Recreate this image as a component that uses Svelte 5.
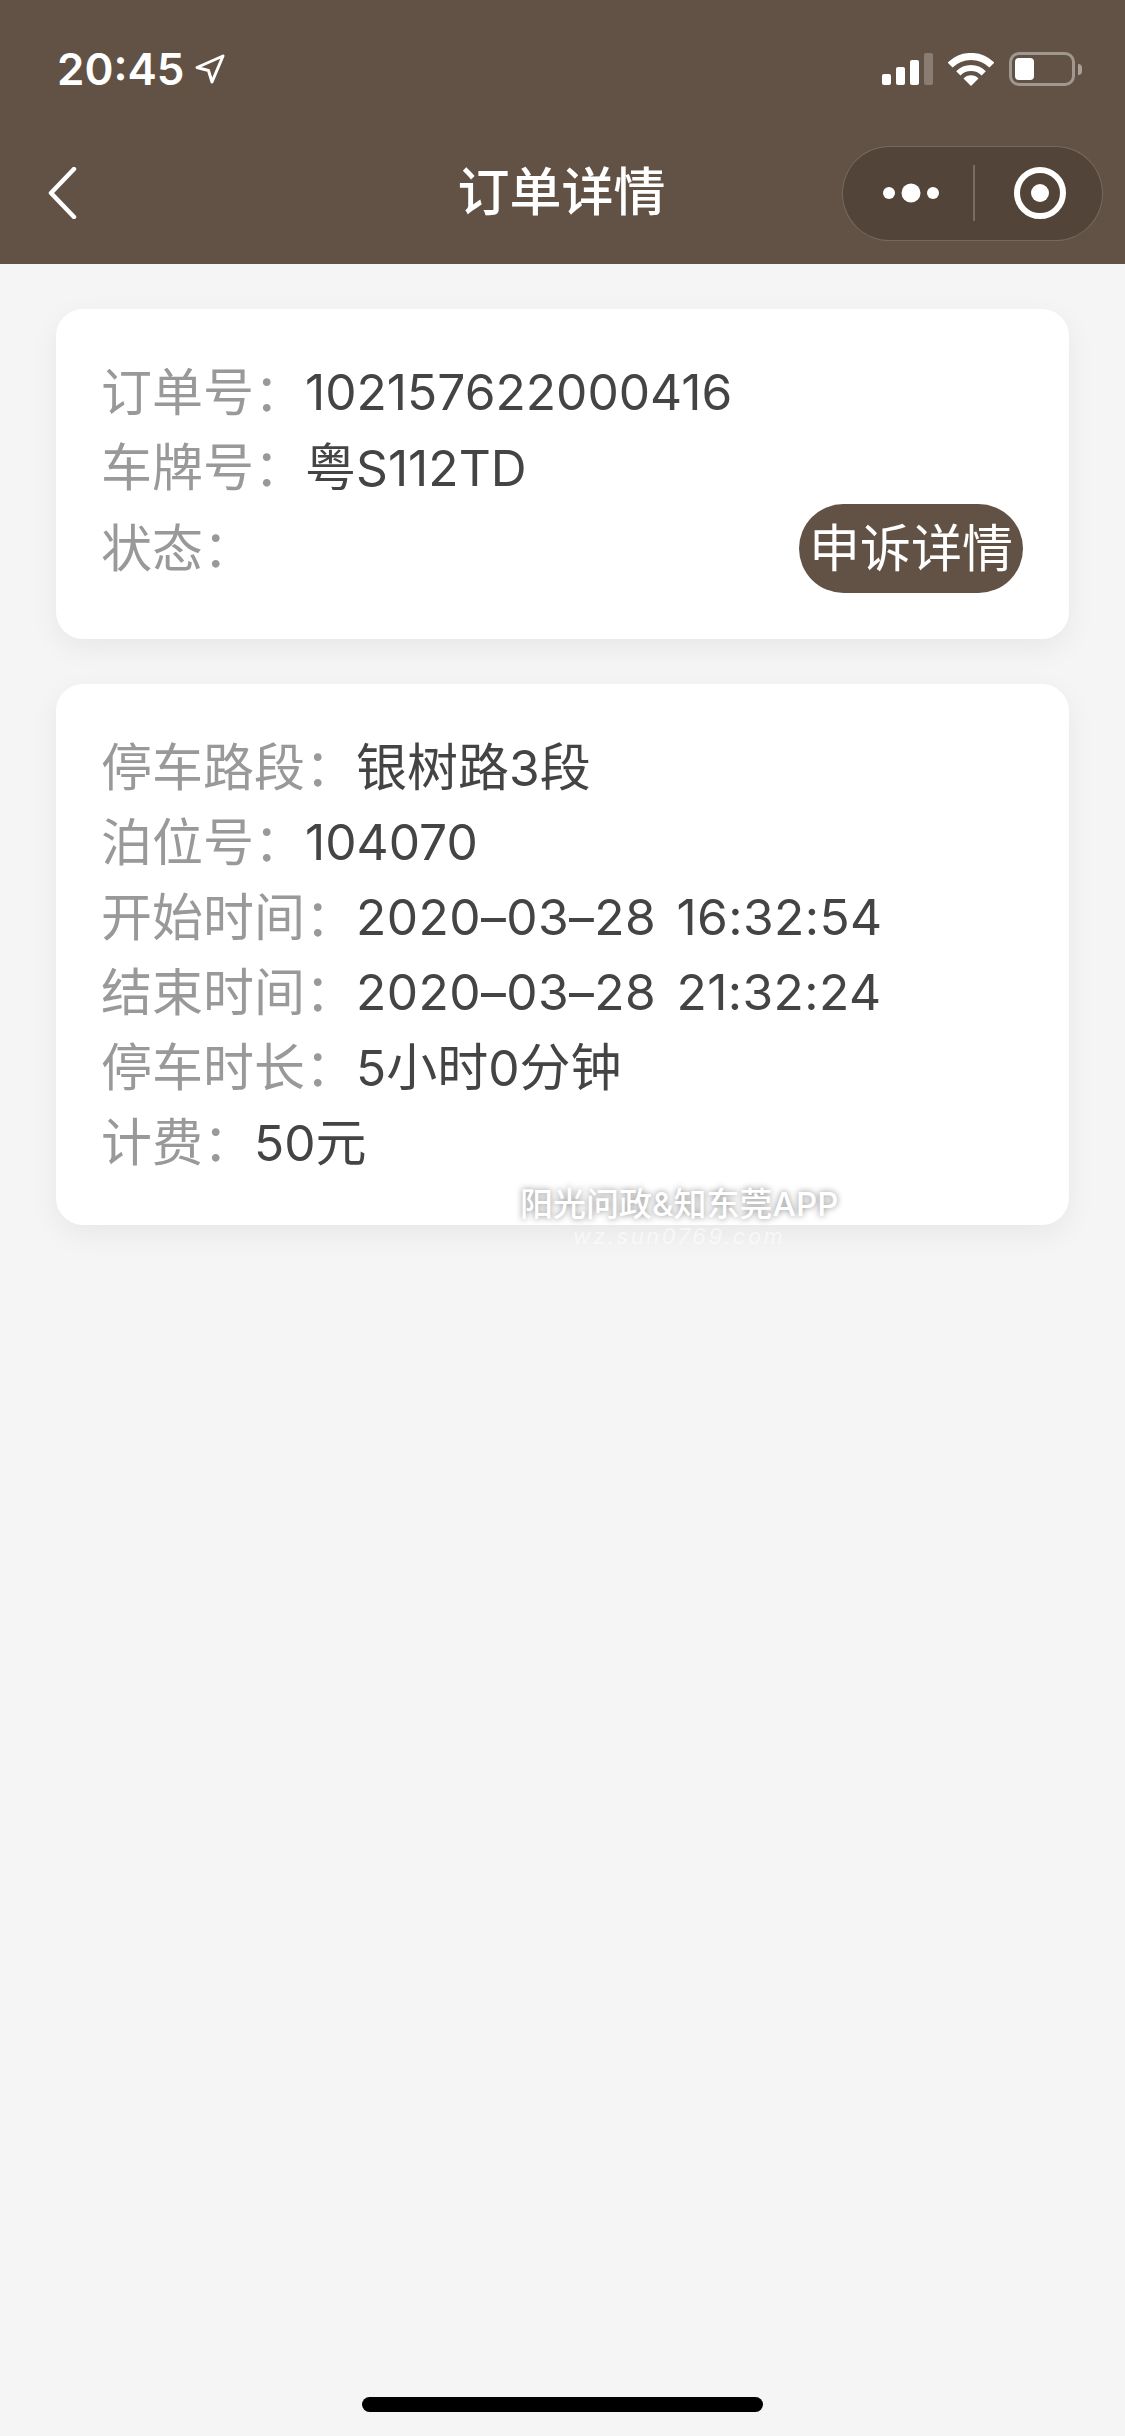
<script>
  const orderRows = [
    { label: '订单号：', value: '102157622000416' },
    { label: '车牌号：', value: '粤S112TD' }
  ];
  const parkingRows = [
    { label: '停车路段：', value: '银树路3段' },
    { label: '泊位号：', value: '104070' },
    { label: '开始时间：', value: '2020–03–28 16:32:54', date: true },
    { label: '结束时间：', value: '2020–03–28 21:32:24', date: true },
    { label: '停车时长：', value: '5小时0分钟' },
    { label: '计费：', value: '50元' }
  ];

  // digits run a bit smaller than the hanzi next to them
  const parts = (text) => text.split(/([\u4e00-\u9fff]+)/).filter(Boolean);
  const isHan = (text) => /[\u4e00-\u9fff]/.test(text);
</script>

{#snippet infoRow(row)}
  <div class="row">
    <span class="label">{row.label}</span>
    <span class="value" class:date={row.date}>
      {#each parts(row.value) as part}
        {#if isHan(part)}<span class="han">{part}</span>{:else}{part}{/if}
      {/each}
    </span>
  </div>
{/snippet}

<div class="page">
  <header class="head">
    <div class="status">
      <div class="clock">
        <span class="time">20:45</span>
        <svg class="arrow" width="30" height="30" viewBox="0 0 30 30">
          <path d="M28 2 L2 13.5 L13.5 16.5 L17 28 Z" fill="none" stroke="#fff" stroke-width="3" stroke-linejoin="round" />
        </svg>
      </div>
      <div class="sys">
        <svg width="51" height="32" viewBox="0 0 51 32">
          <rect x="0" y="21" width="9" height="11" rx="2" fill="#fff" />
          <rect x="14" y="14" width="9" height="18" rx="2" fill="#fff" />
          <rect x="28" y="7" width="9" height="25" rx="2" fill="#fff" />
          <rect x="42" y="0" width="9" height="32" rx="2" fill="#fff" fill-opacity="0.25" />
        </svg>
        <svg width="46" height="33" viewBox="0 0 46 33">
          <path d="M2.1 12.1 A29.5 29.5 0 0 1 43.9 12.1" fill="none" stroke="#fff" stroke-width="7" />
          <path d="M10.3 20.3 A18 18 0 0 1 35.7 20.3" fill="none" stroke="#fff" stroke-width="6" />
          <path d="M23 33 L15.5 25.5 A10.5 10.5 0 0 1 30.5 25.5 Z" fill="#fff" />
        </svg>
        <div class="battery">
          <div class="battery-body"><div class="battery-level"></div></div>
          <div class="battery-cap"></div>
        </div>
      </div>
    </div>
    <nav class="nav">
      <svg class="back" width="29" height="52" viewBox="0 0 29 52">
        <path d="M26 2 L3 26 L26 50" fill="none" stroke="#fff" stroke-width="4.5" stroke-linecap="round" stroke-linejoin="round" />
      </svg>
      <h1>订单详情</h1>
      <div class="capsule">
        <svg width="56" height="20" viewBox="0 0 56 20">
          <circle cx="6" cy="10" r="6" fill="#fff" />
          <circle cx="28" cy="10" r="9.5" fill="#fff" />
          <circle cx="50" cy="10" r="6" fill="#fff" />
        </svg>
        <span class="divider"></span>
        <svg width="52" height="52" viewBox="0 0 52 52">
          <circle cx="26" cy="26" r="23" fill="none" stroke="#fff" stroke-width="6" />
          <circle cx="26" cy="26" r="9" fill="#fff" />
        </svg>
      </div>
    </nav>
  </header>

  <main class="content">
    <section class="card">
      {#each orderRows as row}
        {@render infoRow(row)}
      {/each}
      <div class="row status-row">
        <span class="label">状态：</span>
        <button type="button" class="appeal">申诉详情</button>
      </div>
    </section>

    <section class="card">
      {#each parkingRows as row}
        {@render infoRow(row)}
      {/each}
    </section>
  </main>

  <div class="watermark">
    <div class="wm-title">阳光问政&知东莞APP</div>
    <div class="wm-url">wz.sun0769.com</div>
  </div>

  <div class="home"></div>
</div>

<style>
  :global(body) {
    margin: 0;
    background: #f5f5f5;
  }

  .page {
    position: relative;
    display: flex;
    flex-direction: column;
    min-height: 2436px;
    background: #f5f5f5;
    font-family: Inter, "Noto Sans CJK SC", sans-serif;
  }

  .head {
    height: 264px;
    background: #625245;
    color: #fff;
  }

  .status {
    display: flex;
    justify-content: space-between;
    align-items: center;
    height: 138px;
    padding: 0 43px 0 57px;
  }

  .clock {
    display: flex;
    align-items: center;
    gap: 11px;
  }

  .time {
    font-size: 44px;
    font-weight: 600;
    line-height: 50px;
  }

  .sys {
    display: flex;
    align-items: center;
    gap: 15px;
  }

  .battery {
    display: flex;
    align-items: center;
    gap: 3px;
  }

  .battery-body {
    box-sizing: border-box;
    width: 66px;
    height: 34px;
    padding: 3px;
    border: 3px solid rgba(255, 255, 255, 0.4);
    border-radius: 10px;
  }

  .battery-level {
    width: 19px;
    height: 22px;
    background: #fff;
    border-radius: 4px;
  }

  .battery-cap {
    width: 4px;
    height: 11px;
    background: rgba(255, 255, 255, 0.45);
    border-radius: 0 4px 4px 0;
  }

  .nav {
    display: grid;
    grid-template-columns: 1fr auto 1fr;
    align-items: center;
    height: 108px;
    padding: 0 22px 0 48px;
  }

  .back {
    display: block;
  }

  h1 {
    margin: 0 0 0 -28px;
    font-size: 52px;
    font-weight: 500;
    line-height: 110px;
  }

  .capsule {
    box-sizing: border-box;
    justify-self: end;
    display: flex;
    align-items: center;
    width: 261px;
    height: 95px;
    padding-left: 40px;
    background: #524438;
    border: 1.5px solid rgba(255, 255, 255, 0.2);
    border-radius: 48px;
  }

  .divider {
    width: 1.5px;
    height: 56px;
    margin: 0 39px 0 34px;
    background: rgba(255, 255, 255, 0.22);
  }

  .content {
    display: flex;
    flex-direction: column;
    gap: 45px;
    padding: 45px 56px 0;
  }

  .card {
    padding: 45px 46px 46px 45px;
    background: #fff;
    border-radius: 27px;
    box-shadow: 0 9px 30px rgba(0, 0, 0, 0.06);
  }

  .row {
    display: flex;
    height: 75px;
    font-size: 51px;
    line-height: 77px;
    white-space: nowrap;
  }

  .status-row {
    justify-content: space-between;
    align-items: center;
    height: 89px;
  }

  .label {
    color: #999;
  }

  .value {
    color: #444;
    font-size: 49.7px;
  }

  .date {
    letter-spacing: 0.4px;
    word-spacing: 6px;
  }

  .han {
    font-size: 51px;
  }

  .appeal {
    width: 224px;
    height: 89px;
    padding: 0;
    border: none;
    border-radius: 45px;
    background: #625245;
    color: #fff;
    font: inherit;
    line-height: 89px;
  }

  .watermark {
    position: absolute;
    top: 1186px;
    left: 520px;
    width: 318px;
    text-align: center;
    color: #fff;
  }

  .wm-title {
    font-size: 33px;
    font-weight: 500;
    line-height: 36px;
    white-space: nowrap;
    text-shadow: 0 0 6px rgba(0, 0, 0, 0.5);
    opacity: 0.92;
  }

  .wm-url {
    margin-top: 3px;
    font-size: 22px;
    line-height: 22px;
    font-style: italic;
    letter-spacing: 2.5px;
    opacity: 0.55;
  }

  .home {
    width: 401px;
    height: 15px;
    margin: auto auto 24px;
    background: #000;
    border-radius: 8px;
  }
</style>
